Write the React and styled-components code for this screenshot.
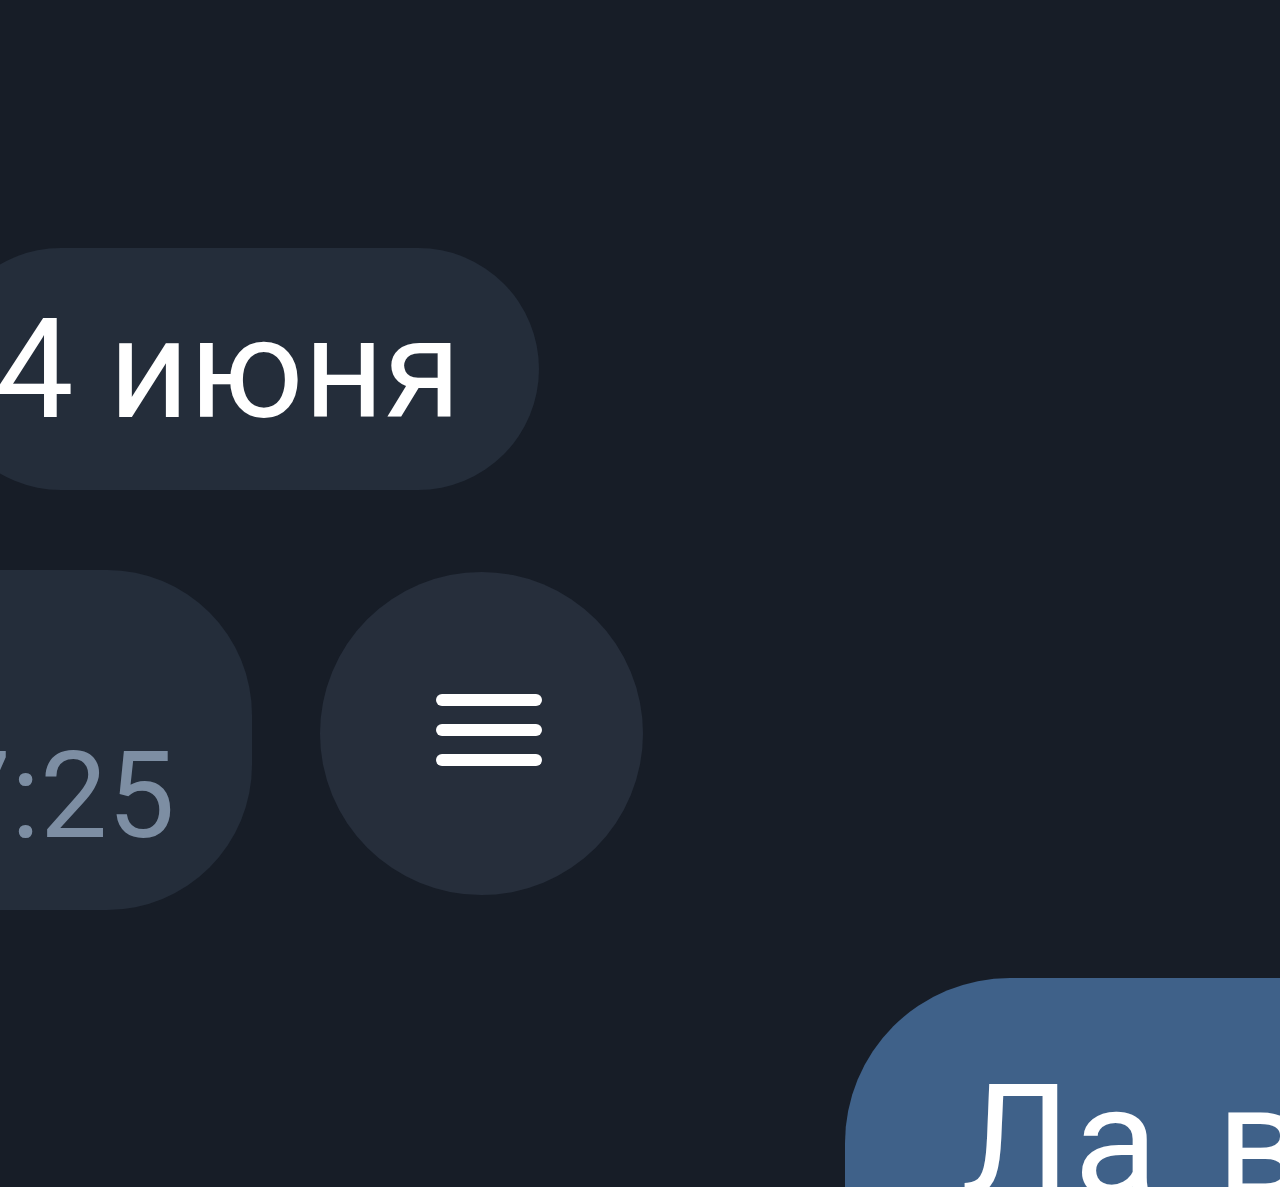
import React from 'react';
import styled, { createGlobalStyle } from 'styled-components';

const GlobalStyle = createGlobalStyle`
  html, body {
    margin: 0;
    padding: 0;
    background: #171d27;
  }
  body {
    font-family: Roboto, "Liberation Sans", sans-serif;
  }
`;

const Screen = styled.div`
  width: 1280px;
  height: 1187px;
  overflow: hidden;
  background: #171d27;
  display: flex;
  flex-direction: column;

  & > * {
    flex-shrink: 0;
  }
`;

const DatePill = styled.div`
  align-self: flex-start;
  display: flex;
  align-items: center;
  height: 242px;
  margin: 248px 0 0 -60px;
  padding: 0 78px 0 55px;
  border-radius: 121px;
  background: #242d3a;
  color: #ffffff;
  font-size: 140px;
  line-height: 1;
  white-space: nowrap;
`;

const MetaRow = styled.div`
  display: flex;
  align-items: flex-start;
  margin-top: 80px;
`;

const TimePill = styled.div`
  flex: none;
  display: flex;
  align-items: flex-end;
  justify-content: flex-end;
  width: 402px;
  height: 340px;
  box-sizing: border-box;
  margin-left: -150px;
  padding: 0 77px 54px 0;
  border-radius: 145px;
  background: #242d3a;
  color: #7d8ea3;
  font-size: 120px;
  line-height: 1;
  white-space: nowrap;
`;

const RoundButton = styled.div`
  flex: none;
  width: 323px;
  height: 323px;
  margin: 2px 0 0 68px;
  border-radius: 50%;
  background: #262e3b;
  display: flex;
  align-items: center;
  justify-content: center;
`;

const Bubble = styled.div`
  margin: 68px 0 0 845px;
  width: 700px;
  height: 400px;
  box-sizing: border-box;
  padding: 87px 0 0 116px;
  border-radius: 165px;
  background: #3f6189;
  color: #ffffff;
  font-size: 155px;
  line-height: 1;
  letter-spacing: 3px;
  word-spacing: 14px;
  white-space: nowrap;
`;

function MenuIcon() {
  return (
    <svg width="120" height="90" viewBox="0 0 120 90" style={{ marginLeft: 14, marginTop: -6 }}>
      <g stroke="#ffffff" strokeWidth="12" strokeLinecap="round">
        <line x1="13" y1="14" x2="107" y2="14" />
        <line x1="13" y1="44" x2="107" y2="44" />
        <line x1="13" y1="74" x2="107" y2="74" />
      </g>
    </svg>
  );
}

export default function App() {
  return (
    <>
      <GlobalStyle />
      <Screen>
        <DatePill>4 июня</DatePill>
        <MetaRow>
          <TimePill>17:25</TimePill>
          <RoundButton>
            <MenuIcon />
          </RoundButton>
        </MetaRow>
        <Bubble>Ла в</Bubble>
      </Screen>
    </>
  );
}
